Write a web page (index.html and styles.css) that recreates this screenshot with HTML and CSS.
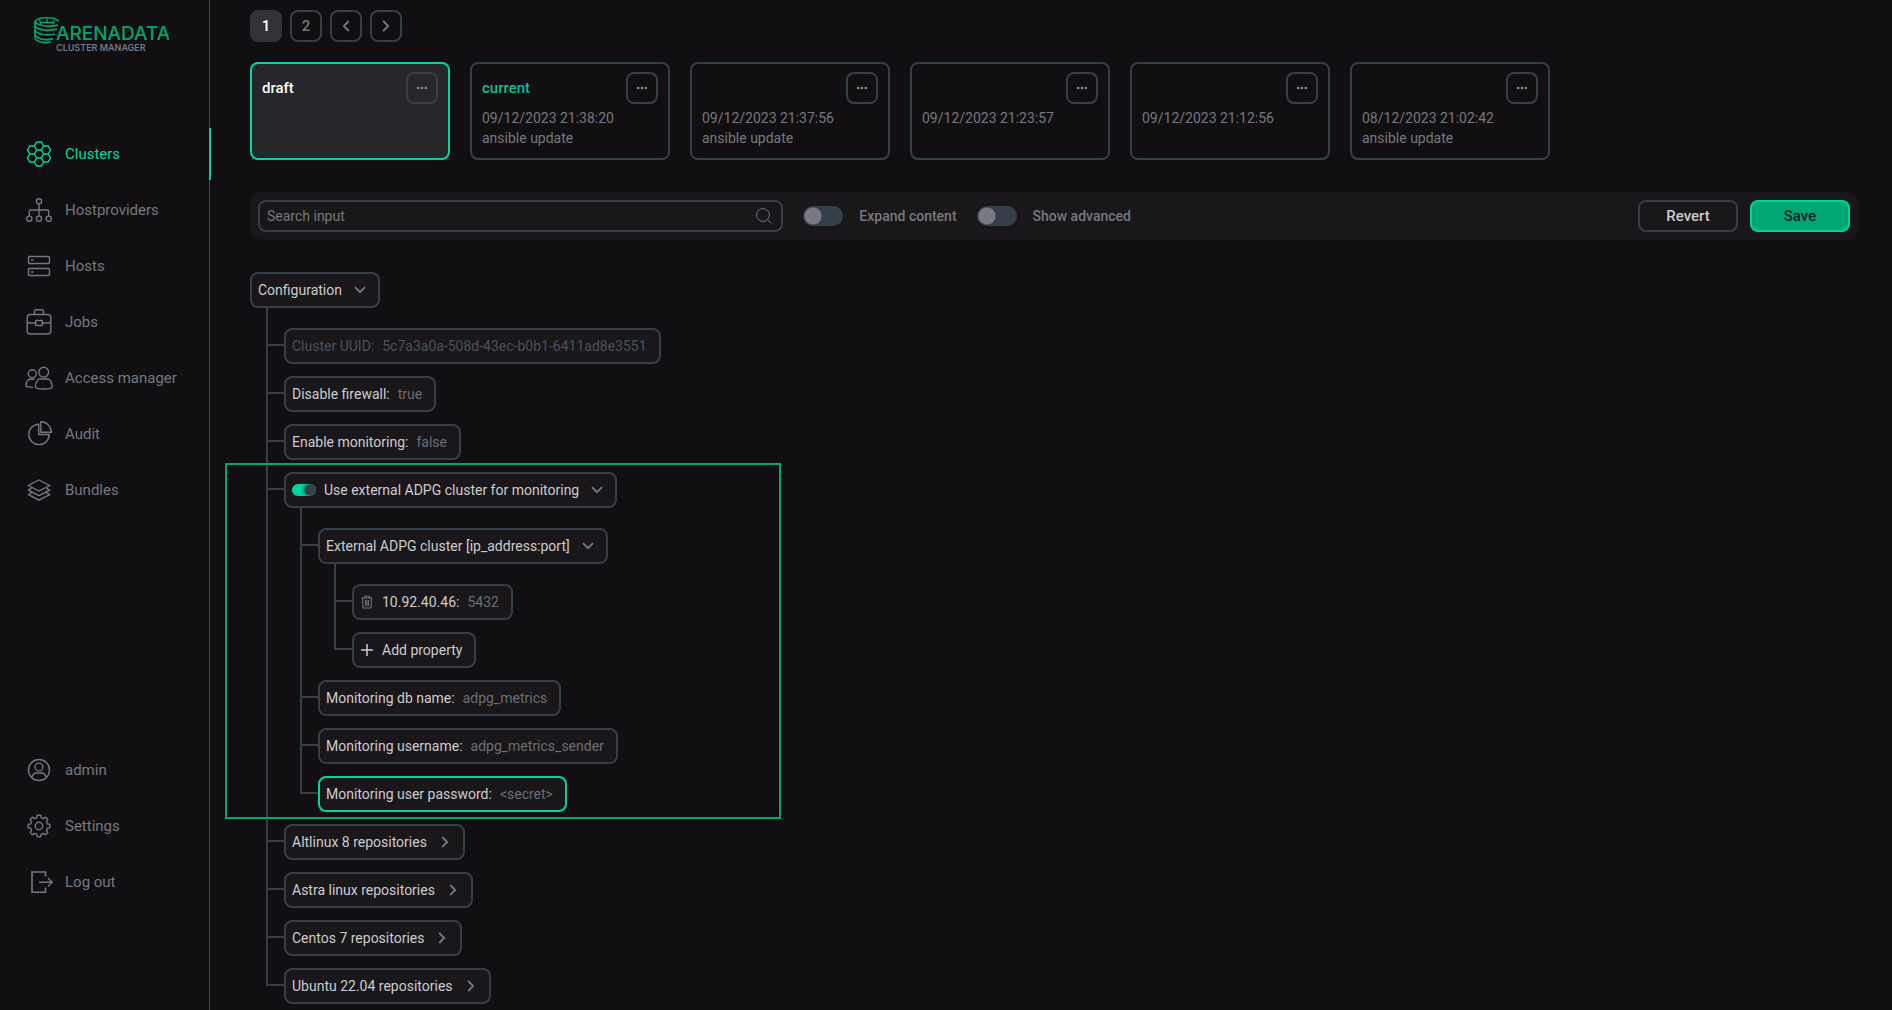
FILE: index.html
```html
<!DOCTYPE html>
<html lang="en">
<head>
<meta charset="utf-8">
<meta name="viewport" content="width=device-width, initial-scale=1">
<title>Arenadata Cluster Manager</title>
<link rel="stylesheet" href="styles.css">
</head>
<body>
<svg class="sprite" aria-hidden="true">
  <symbol id="chev-down" viewBox="0 0 12 8"><path d="M1 1.2l5 5 5-5"/></symbol>
  <symbol id="chev-right" viewBox="0 0 8 12"><path d="M1.2 1l5 5-5 5"/></symbol>
  <symbol id="dots" viewBox="0 0 12 4"><circle cx="2.2" cy="2" r="1.3"/><circle cx="6" cy="2" r="1.3"/><circle cx="9.8" cy="2" r="1.3"/></symbol>
</svg>
<div class="app">
  <aside class="sidebar">
    <a class="logo" href="#" aria-label="Arenadata Cluster Manager">
      <svg viewBox="0 0 136 36" width="136" height="36">
        <g fill="none" stroke="#00a56c" stroke-width="1.7">
          <path d="M2 22V5.500C5 .8 22 .2 26 5.500"/>
          <path d="M2 5.500C3 9 14 11.500 25 9.200"/>
          <path d="M2 10C5 14 14 15.500 24 13.200M2 14.500C5 18.500 13 20 22 18M2 19C5 23 12 24.500 20 22.800M2 22.500C5 26 11 27.300 18 26"/>
          <path d="M6.500 3.800L8 8.500M14 2.500V6.500M21.500 3.800L20 8.500M7 6.500H21.500" stroke-width="1.300"/>
        </g>
        <text class="logo-name" x="23" y="24">ARENADATA</text>
        <text class="logo-sub" x="23" y="35">CLUSTER MANAGER</text>
      </svg>
    </a>
    <nav class="menu" aria-label="Main">
      <a class="menu-item active" href="#"><svg class="icon" viewBox="0 0 28 28"><g transform="translate(14 14)"><path d="M-4.600 0L-2.300-4H2.300L4.600 0 2.300 4H-2.300ZM-4.600-8L-2.300-12H2.300L4.600-8 2.300-4H-2.300ZM-4.600 8L-2.300 4H2.300L4.600 8 2.300 12H-2.300ZM2.300-4L4.600-8H9.200L11.500-4 9.200 0H4.600M9.200 0L11.500 4 9.200 8H4.600L2.300 4M-2.300-4L-4.600-8H-9.200L-11.500-4-9.200 0H-4.600M-9.200 0L-11.500 4-9.200 8H-4.600L-2.300 4"/></g></svg>Clusters</a>
      <a class="menu-item" href="#"><svg class="icon" viewBox="0 0 28 28"><circle cx="14" cy="5.300" r="2.600"/><circle cx="4.300" cy="22.700" r="2.600"/><circle cx="14" cy="22.700" r="2.600"/><circle cx="23.700" cy="22.700" r="2.600"/><path d="M14 8V20M4.300 20V15.500Q4.300 14 5.800 14H22.200Q23.700 14 23.700 15.500V20"/></svg>Hostproviders</a>
      <a class="menu-item" href="#"><svg class="icon" viewBox="0 0 28 28"><rect x="3.500" y="4.500" width="21" height="7" rx="1"/><rect x="3.500" y="16.500" width="21" height="7" rx="1"/><path d="M6 8H8.500M6 20H8.500"/></svg>Hosts</a>
      <a class="menu-item" href="#"><svg class="icon" viewBox="0 0 28 28"><rect x="2.200" y="6.500" width="23.600" height="19.500" rx="3"/><path d="M9.500 6.500V3Q9.500 1.700 11 1.700H17Q18.500 1.700 18.500 3V6.500M2.200 13.500Q3 15 4.500 15H10.500M17.500 15H23.500Q25 15 25.800 13.500"/><rect x="10.700" y="12.500" width="6.600" height="5" rx=".5"/></svg>Jobs</a>
      <a class="menu-item" href="#"><svg class="icon" viewBox="0 0 28 28"><circle cx="18.700" cy="8.200" r="4.900"/><circle cx="7.300" cy="9.700" r="4"/><path d="M14 15H23.500Q27.200 17.500 27.200 23Q27 25 18.800 25T10.500 23Q10.500 17.500 14 15ZM9.500 15.300H4Q1 17 1 22Q2 23.200 8 23.200"/></svg>Access manager</a>
      <a class="menu-item" href="#"><svg class="icon" viewBox="0 0 28 28"><path d="M13.700 4.200A10.200 10.200 0 1 0 24.200 14.500H13.700ZM15.800 1.800A10.500 10.500 0 0 1 26.300 12.300H15.800Z"/></svg>Audit</a>
      <a class="menu-item" href="#"><svg class="icon" viewBox="0 0 28 28"><path d="M14 4L24.500 9.500 14 15 3.500 9.500ZM6.500 12.200L3.500 14.200 14 19.700 24.500 14.200 21.500 12.200M6.500 16.700L3.500 18.700 14 24.200 24.500 18.700 21.500 16.700"/></svg>Bundles</a>
    </nav>
    <nav class="menu menu-bottom" aria-label="Account">
      <a class="menu-item" href="#"><svg class="icon" viewBox="0 0 28 28"><circle cx="14" cy="14" r="10.500"/><circle cx="14" cy="11" r="3.900"/><path d="M6.800 21.200Q8.500 17 11 17H17Q19.500 17 21.200 21.200"/></svg>admin</a>
      <a class="menu-item" href="#"><svg class="icon" viewBox="0 0 28 28"><circle cx="14" cy="14" r="3.700"/><path d="M11.900 5.700 12.200 3.300Q14 2.600 15.800 3.300L16.100 5.700Q17.100 6 18.400 6.600L20.300 5.200Q22 6 22.800 7.700L21.400 9.600Q22 10.700 22.300 11.900L24.700 12.200Q25.400 14 24.700 15.800L22.300 16.100Q22 17.200 21.400 18.400L22.800 20.300Q22 22 20.300 22.800L18.400 21.400Q17.200 22 16.100 22.300L15.800 24.700Q14 25.400 12.200 24.700L11.900 22.300Q10.800 22 9.600 21.400L7.700 22.800Q6 22 5.200 20.300L6.600 18.400Q6 17.200 5.700 16.100L3.300 15.800Q2.600 14 3.300 12.200L5.700 11.900Q6 10.800 6.600 9.600L5.200 7.700Q6 6 7.700 5.200L9.600 6.600Q10.800 6 11.900 5.700Z"/></svg>Settings</a>
      <a class="menu-item" href="#"><svg class="icon" viewBox="0 0 28 28"><path d="M20.500 8.500V4H7V24.200H20.500V19.500" stroke-width="1.600"/><path d="M14 14.300H27.200M23 10L27.300 14.300 23 18.600"/></svg>Log out</a>
    </nav>
  </aside>

  <main class="main">
    <nav class="pager" aria-label="Pages">
      <button class="square current" type="button">1</button>
      <button class="square" type="button">2</button>
      <button class="square" type="button" aria-label="Previous page"><svg class="chev flip" width="8" height="12"><use href="#chev-right"/></svg></button>
      <button class="square" type="button" aria-label="Next page"><svg class="chev" width="8" height="12"><use href="#chev-right"/></svg></button>
    </nav>

    <section class="versions" aria-label="Configuration versions">
      <article class="card selected"><header class="card-head"><h2>draft</h2><button class="square" type="button" aria-label="Actions"><svg class="dots" width="12" height="4"><use href="#dots"/></svg></button></header></article>
      <article class="card"><header class="card-head"><h2 class="green">current</h2><button class="square" type="button" aria-label="Actions"><svg class="dots" width="12" height="4"><use href="#dots"/></svg></button></header><p>09/12/2023 21:38:20</p><p>ansible update</p></article>
      <article class="card"><header class="card-head"><button class="square" type="button" aria-label="Actions"><svg class="dots" width="12" height="4"><use href="#dots"/></svg></button></header><p>09/12/2023 21:37:56</p><p>ansible update</p></article>
      <article class="card"><header class="card-head"><button class="square" type="button" aria-label="Actions"><svg class="dots" width="12" height="4"><use href="#dots"/></svg></button></header><p>09/12/2023 21:23:57</p></article>
      <article class="card"><header class="card-head"><button class="square" type="button" aria-label="Actions"><svg class="dots" width="12" height="4"><use href="#dots"/></svg></button></header><p>09/12/2023 21:12:56</p></article>
      <article class="card"><header class="card-head"><button class="square" type="button" aria-label="Actions"><svg class="dots" width="12" height="4"><use href="#dots"/></svg></button></header><p>08/12/2023 21:02:42</p><p>ansible update</p></article>
    </section>

    <section class="toolbar" aria-label="Configuration tools">
      <label class="search"><input type="text" placeholder="Search input" aria-label="Search input"><svg viewBox="0 0 16 16" width="16" height="16"><circle cx="7" cy="7" r="6.400"/><path d="M11.500 11.500L15.500 15.500"/></svg></label>
      <label class="toggle"><input class="switch" type="checkbox">Expand content</label>
      <label class="toggle"><input class="switch" type="checkbox">Show advanced</label>
      <div class="actions">
        <button class="btn" type="button">Revert</button>
        <button class="btn primary" type="button">Save</button>
      </div>
    </section>

    <section class="tree" aria-label="Configuration">
      <button class="node" type="button">Configuration<svg class="chev arrow" width="12" height="8"><use href="#chev-down"/></svg></button>
      <ul>
        <li><button class="node" type="button" disabled>Cluster UUID:<span class="value">5c7a3a0a-508d-43ec-b0b1-6411ad8e3551</span></button></li>
        <li><button class="node" type="button">Disable firewall:<span class="value">true</span></button></li>
        <li><button class="node" type="button">Enable monitoring:<span class="value">false</span></button></li>
        <li>
          <div class="node"><input class="switch small" id="ext" type="checkbox" checked><label for="ext">Use external ADPG cluster for monitoring</label><svg class="chev arrow" width="12" height="8"><use href="#chev-down"/></svg></div>
          <ul>
            <li>
              <button class="node" type="button">External ADPG cluster [ip_address:port]<svg class="chev arrow" width="12" height="8"><use href="#chev-down"/></svg></button>
              <ul>
                <li><button class="node" type="button"><svg class="lead trash" viewBox="0 0 14 14" width="14" height="14"><path d="M1.500 3H12.500M4.500 3V1.200H9.500V3M2.500 3L3 13H11L11.500 3M5.400 5V11M7 5V11M8.600 5V11"/></svg>10.92.40.46:<span class="value">5432</span></button></li>
                <li><button class="node" type="button"><svg class="lead plus" viewBox="0 0 14 14" width="14" height="14"><path d="M7 1V13M1 7H13"/></svg>Add property</button></li>
              </ul>
            </li>
            <li><button class="node" type="button">Monitoring db name:<span class="value">adpg_metrics</span></button></li>
            <li><button class="node" type="button">Monitoring username:<span class="value">adpg_metrics_sender</span></button></li>
            <li><button class="node focused" type="button">Monitoring user password:<span class="value">&lt;secret&gt;</span></button></li>
          </ul>
          <div class="frame"></div>
        </li>
        <li><button class="node" type="button">Altlinux 8 repositories<svg class="chev arrow side" width="8" height="12"><use href="#chev-right"/></svg></button></li>
        <li><button class="node" type="button">Astra linux repositories<svg class="chev arrow side" width="8" height="12"><use href="#chev-right"/></svg></button></li>
        <li><button class="node" type="button">Centos 7 repositories<svg class="chev arrow side" width="8" height="12"><use href="#chev-right"/></svg></button></li>
        <li><button class="node" type="button">Ubuntu 22.04 repositories<svg class="chev arrow side" width="8" height="12"><use href="#chev-right"/></svg></button></li>
      </ul>
    </section>
  </main>
</div>
</body>
</html>
```
FILE: styles.css
```css
:root {
  --bg: #110f12;
  --panel: #19171a;
  --line: #353f49;
  --muted: #76787f;
  --text: #cdcccf;
  --green: #00d7a0;
}

* { box-sizing: border-box; }

body {
  margin: 0;
  background: var(--bg);
  color: var(--text);
  font: 14px/20px Roboto, "Liberation Sans", sans-serif;
}

button, input { font: inherit; color: inherit; }
button { padding: 0; background: none; cursor: pointer; }
svg { display: block; flex: none; }
.sprite { position: absolute; width: 0; height: 0; }

.app { display: flex; min-height: 100vh; }

/* Sidebar */
.sidebar {
  position: sticky;
  top: 0;
  display: flex;
  flex: 0 0 210px;
  flex-direction: column;
  height: 100vh;
  padding: 16px 0 102px;
  border-right: 1px solid #46484d;
}
.logo { margin: 0 0 76px 33px; }
.logo-name { font: 500 19px Inter, sans-serif; fill: #00a56c; }
.logo-sub { font: 600 9px Inter, sans-serif; fill: #6f7b86; }

.menu { display: flex; flex-direction: column; gap: 4px; }
.menu-bottom { margin-top: auto; }
.menu-item {
  display: flex;
  align-items: center;
  gap: 12px;
  height: 52px;
  margin-right: -2px;
  padding-left: 25px;
  color: var(--muted);
  font-size: 15px;
  text-decoration: none;
}
.menu-item.active { border-right: 2px solid var(--green); color: var(--green); }
.icon { width: 28px; height: 28px; fill: none; stroke: currentColor; stroke-width: 1.4; }

/* Main column */
.main { flex: 1; min-width: 0; padding: 10px 34px 6px 40px; }

.square {
  display: flex;
  align-items: center;
  justify-content: center;
  width: 32px;
  height: 32px;
  border: 2px solid var(--line);
  border-radius: 8px;
  color: var(--muted);
  font-size: 15px;
  font-weight: 500;
}
.square.current { border-color: #323238; background: #323238; color: #fff; }

.pager { display: flex; gap: 8px; }
.chev { fill: none; stroke: var(--muted); stroke-width: 1.8; }
.flip { transform: scaleX(-1); }
.dots { fill: #8b8d93; }

.versions { display: flex; flex-wrap: wrap; gap: 20px; margin-top: 20px; }
.card {
  width: 200px;
  height: 98px;
  padding: 8px 10px;
  border: 2px solid var(--line);
  border-radius: 8px;
  color: var(--muted);
}
.card.selected { border-color: var(--green); background: #27262b; }
.card-head { display: flex; align-items: center; height: 32px; margin-bottom: 4px; }
.card-head .square { margin-left: auto; }
.card h2 { margin: 0; color: #fff; font-size: 15px; font-weight: 500; }
.card h2.green { color: #00c391; }
.card p { margin: 0; }

.toolbar {
  display: flex;
  align-items: center;
  gap: 20px;
  margin-top: 32px;
  padding: 8px;
  border-radius: 12px;
  background: var(--panel);
}
.search {
  display: flex;
  flex: 0 0 33%;
  align-items: center;
  height: 32px;
  padding: 0 9px 0 7px;
  border: 2px solid var(--line);
  border-radius: 8px;
}
.search input { flex: 1; min-width: 0; padding: 0; border: 0; outline: 0; background: none; }
.search input::placeholder { color: var(--muted); opacity: 1; }
.search svg { fill: none; stroke: var(--muted); }

.toggle { display: flex; align-items: center; gap: 16px; color: var(--muted); font-weight: 500; }
.switch {
  flex: none;
  width: 40px;
  height: 20px;
  margin: 0;
  border-radius: 10px;
  appearance: none;
  background: radial-gradient(circle at 10px 10px, #797a82 8px, transparent 9px) var(--line);
}
.switch.small {
  width: 24px;
  height: 12px;
  border-radius: 6px;
  background: radial-gradient(circle at 18px 6px, #38424c 5px, #00a67b 6px, transparent 9px) var(--green);
}

.actions { display: flex; gap: 12px; margin-left: auto; }
.btn {
  width: 100px;
  height: 32px;
  border: 2px solid var(--line);
  border-radius: 8px;
  font-size: 15px;
  font-weight: 500;
}
.btn.primary { border-color: var(--green); background: #00a772; color: #14231f; }

/* Configuration tree */
.tree { margin-top: 32px; }
.tree ul { margin: 0; padding: 20px 0 0 34px; list-style: none; }
.tree li { position: relative; }
.tree li + li { margin-top: 12px; }
.tree li::before {
  content: "";
  position: absolute;
  top: 16px;
  left: -18px;
  width: 18px;
  height: 2px;
  background: var(--line);
}
.tree li::after {
  content: "";
  position: absolute;
  top: -12px;
  bottom: 0;
  left: -18px;
  width: 2px;
  background: var(--line);
}
.tree li:first-child::after { top: -20px; }
.tree li:last-child::after { bottom: auto; height: 30px; }

.node {
  display: flex;
  align-items: center;
  width: max-content;
  height: 36px;
  padding: 0 12px 0 6px;
  border: 2px solid var(--line);
  border-radius: 8px;
  background: var(--panel);
}
.node:disabled, .node:disabled .value { color: #4a525b; }
.node.focused { border-color: var(--green); }
.node .switch, .lead { margin-right: 8px; }
.value { margin-left: 8px; color: #6c6e75; }
.arrow { margin-left: 12px; }
.arrow.side { margin: 0 2px 0 14px; }
.lead { fill: none; stroke: currentColor; }
.trash { color: var(--muted); }
.plus { stroke-width: 1.5; }

.frame {
  position: absolute;
  z-index: 1;
  top: -9px;
  bottom: -7px;
  left: -59px;
  width: 556px;
  border: 2px solid #00a67b;
  pointer-events: none;
}
```
